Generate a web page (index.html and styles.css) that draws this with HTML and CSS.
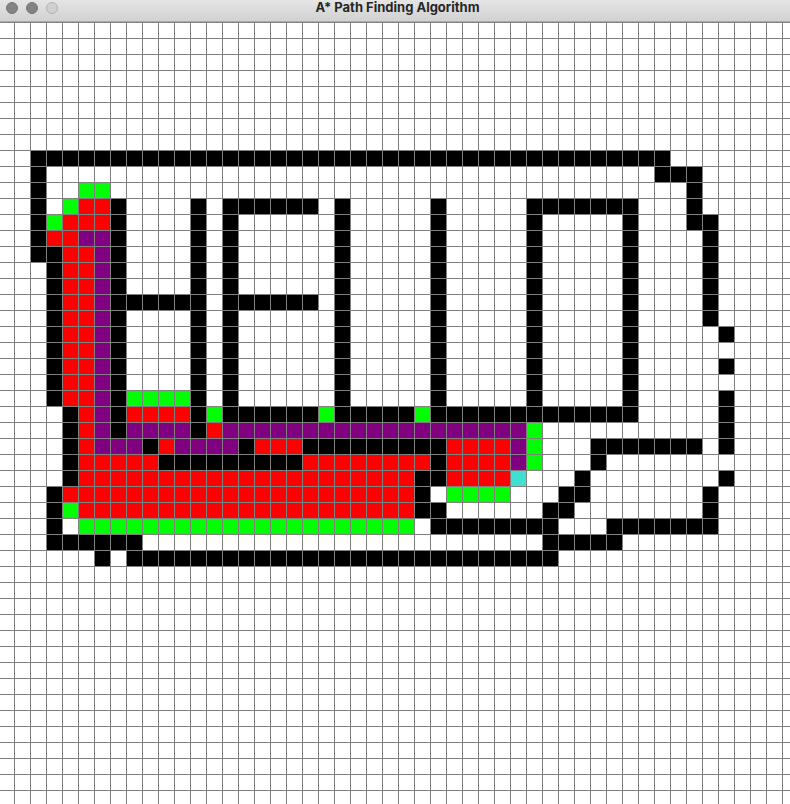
FILE: index.html
```html
<!DOCTYPE html>
<html lang="en">
<head>
<meta charset="utf-8">
<title>A* Path Finding Algorithm</title>
<link rel="stylesheet" href="styles.css">
</head>
<body>
<header class="titlebar">
  <div class="controls">
    <button class="control" type="button" aria-label="Close"></button>
    <button class="control" type="button" aria-label="Minimize"></button>
    <button class="control control-off" type="button" aria-label="Zoom" disabled></button>
  </div>
  <h1 class="title">A* Path Finding Algorithm</h1>
</header>
<main class="board">
  <div class="cells" id="cells"></div>
</main>
<script src="board.js"></script>
</body>
</html>
```
FILE: styles.css
```css
* {
  box-sizing: border-box;
}

body {
  margin: 0;
  min-height: 100vh;
  display: flex;
  flex-direction: column;
  overflow: hidden;
  background: #fff;
  font-family: Inter, "Open Sans", sans-serif;
}

.titlebar {
  height: 22px;
  padding: 0 1px 0 6px;
  display: grid;
  grid-template-columns: 1fr auto 1fr;
  align-items: start;
  background: linear-gradient(#e5e5e5, #d1d1d1);
  border-bottom: 1px solid #acacac;
}

.controls {
  display: flex;
  gap: 8px;
  padding-top: 2px;
}

.control {
  width: 12px;
  height: 12px;
  padding: 0;
  border: 1px solid #777;
  border-radius: 50%;
  background: #838383;
}

.control-off {
  border-color: #b3b3b3;
  background: #d0d0d0;
}

.title {
  margin: 0;
  font-size: 13px;
  line-height: 14px;
  font-weight: 700;
  color: #262626;
}

.board {
  flex: 1;
  overflow: hidden;
  background:
    repeating-linear-gradient(#808080 0 1px, transparent 1px 16px),
    repeating-linear-gradient(90deg, transparent 0 14px, #808080 14px 15px, transparent 15px 16px);
}

.cells {
  display: grid;
  grid-template-columns: repeat(50, 15px);
  grid-auto-rows: 15px;
  gap: 1px;
  margin: 1px 0 0 -1px;
}

.barrier { background: #000; }
.closed { background: #f00; }
.open { background: #0f0; }
.path { background: #800080; }
.end { background: #40e0d0; }
```
FILE: board.js
```javascript
// Each row lists runs of cells: a state letter, then a column or a column range.
const rows = {
  8: "k2-41",
  9: "k2 k41-43",
  10: "k2 g5-6 k43",
  11: "k2 g4 r5-6 k7 k12 k14-19 k21 k27 k33-39 k43",
  12: "k2 g3 r4-6 k7 k12 k14 k21 k27 k33 k39 k43-44",
  13: "k2 r3-4 p5-6 k7 k12 k14 k21 k27 k33 k39 k44",
  14: "k2-3 r4-5 p6 k7 k12 k14 k21 k27 k33 k39 k44",
  15: "k3 r4-5 p6 k7 k12 k14 k21 k27 k33 k39 k44",
  16: "k3 r4-5 p6 k7 k12 k14 k21 k27 k33 k39 k44",
  17: "k3 r4-5 p6 k7-12 k14-19 k21 k27 k33 k39 k44",
  18: "k3 r4-5 p6 k7 k12 k14 k21 k27 k33 k39 k44",
  19: "k3 r4-5 p6 k7 k12 k14 k21 k27 k33 k39 k45",
  20: "k3 r4-5 p6 k7 k12 k14 k21 k27 k33 k39",
  21: "k3 r4-5 p6 k7 k12 k14 k21 k27 k33 k39 k45",
  22: "k3 r4-5 p6 k7 k12 k14 k21 k27 k33 k39",
  23: "k3 r4-5 p6 k7 g8-11 k12 k14 k21 k27 k33 k39 k45",
  24: "k4 r5 p6 k7 r8-11 k12 g13 k14-19 g20 k21-25 g26 k27-39 k45",
  25: "k4 r5 p6 k7 p8-11 k12 r13 p14-32 g33 k45",
  26: "k4 r5 p6-8 k9 r10 p11-14 k15 r16-18 k19-27 r28-31 p32 g33 k37-43 k45",
  27: "k4 r5-9 k10-18 r19-26 k27 r28-31 p32 g33 k37",
  28: "k4 r5-25 k26-27 r28-31 t32 k36 k45",
  29: "k3 r4-25 k26 g28-31 k35-36 k44",
  30: "k3 g4 r5-25 k26-27 k34-35 k44",
  31: "k3 g5-25 k27-34 k38-44",
  32: "k3-8 k34-38",
  33: "k6 k8-34"
};

const states = { k: "barrier", r: "closed", g: "open", p: "path", t: "end" };
const cells = document.getElementById("cells");

for (const [row, runs] of Object.entries(rows)) {
  for (const run of runs.split(" ")) {
    const [first, last = first] = run.slice(1).split("-").map(Number);
    for (let col = first; col <= last; col++) {
      const cell = document.createElement("div");
      cell.className = states[run[0]];
      cell.style.gridArea = `${Number(row) + 1} / ${col + 1}`;
      cells.append(cell);
    }
  }
}
```
